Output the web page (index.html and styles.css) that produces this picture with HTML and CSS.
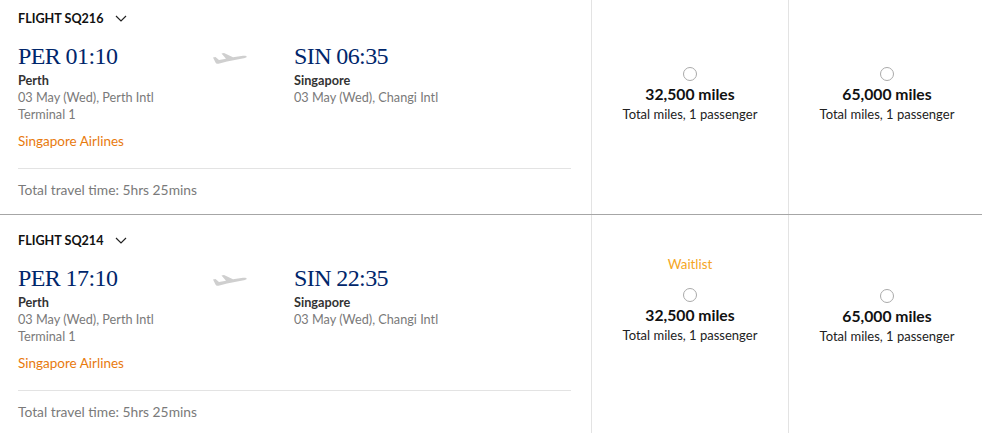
FILE: index.html
```html
<!DOCTYPE html>
<html lang="en">
<head>
<meta charset="utf-8">
<title>Flights</title>
<link rel="stylesheet" href="styles.css">
</head>
<body>
<section class="row">
  <div class="info">
    <div class="flight-title"><span>FLIGHT SQ216</span>
      <svg class="chev" width="12" height="7" viewBox="0 0 12 7"><path d="M1 1l5 5 5-5" fill="none" stroke="#222" stroke-width="1.2"/></svg>
    </div>
    <div class="legs">
      <div class="leg">
        <div class="time">PER 01:10</div>
        <div class="city">Perth</div>
        <div class="detail">03 May (Wed), Perth Intl</div>
        <div class="detail">Terminal 1</div>
      </div>
      <div class="plane">
        <svg width="34" height="14" viewBox="0 0 34 14"><path d="M0 5.500l2.500-.5 3.500 3 7-1.200L8.500 1.500 11 1l9 4.300 10-1.500c2-.3 3.800.2 3.800 1 0 .7-1.500 1.100-3 1.400L14 9.500l-8.500 2.200C4 12 3 11.500 2.500 10.500z" fill="#cfcfcf"/></svg>
      </div>
      <div class="leg">
        <div class="time">SIN 06:35</div>
        <div class="city">Singapore</div>
        <div class="detail">03 May (Wed), Changi Intl</div>
      </div>
    </div>
    <div class="airline">Singapore Airlines</div>
    <div class="total">Total travel time: 5hrs 25mins</div>
  </div>
  <div class="fare">
    <span class="radio"></span>
    <div class="miles">32,500 miles</div>
    <div class="note">Total miles, 1 passenger</div>
  </div>
  <div class="fare">
    <span class="radio"></span>
    <div class="miles">65,000 miles</div>
    <div class="note">Total miles, 1 passenger</div>
  </div>
</section>
<section class="row second">
  <div class="info">
    <div class="flight-title"><span>FLIGHT SQ214</span>
      <svg class="chev" width="12" height="7" viewBox="0 0 12 7"><path d="M1 1l5 5 5-5" fill="none" stroke="#222" stroke-width="1.2"/></svg>
    </div>
    <div class="legs">
      <div class="leg">
        <div class="time">PER 17:10</div>
        <div class="city">Perth</div>
        <div class="detail">03 May (Wed), Perth Intl</div>
        <div class="detail">Terminal 1</div>
      </div>
      <div class="plane">
        <svg width="34" height="14" viewBox="0 0 34 14"><path d="M0 5.500l2.500-.5 3.500 3 7-1.200L8.500 1.500 11 1l9 4.300 10-1.500c2-.3 3.800.2 3.800 1 0 .7-1.500 1.100-3 1.400L14 9.500l-8.500 2.200C4 12 3 11.500 2.500 10.500z" fill="#cfcfcf"/></svg>
      </div>
      <div class="leg">
        <div class="time">SIN 22:35</div>
        <div class="city">Singapore</div>
        <div class="detail">03 May (Wed), Changi Intl</div>
      </div>
    </div>
    <div class="airline">Singapore Airlines</div>
    <div class="total">Total travel time: 5hrs 25mins</div>
  </div>
  <div class="fare">
    <div class="waitlist">Waitlist</div>
    <span class="radio"></span>
    <div class="miles">32,500 miles</div>
    <div class="note">Total miles, 1 passenger</div>
  </div>
  <div class="fare">
    <span class="radio"></span>
    <div class="miles">65,000 miles</div>
    <div class="note">Total miles, 1 passenger</div>
  </div>
</section>
</body>
</html>
```
FILE: styles.css
```css
html, body {
  margin: 0;
  padding: 0;
  background: #fff;
}
body {
  width: 982px;
  height: 433px;
  overflow: hidden;
  font-family: "Lato", "Liberation Sans", sans-serif;
  font-size: 12.700px;
  color: #333;
}
.row {
  display: grid;
  grid-template-columns: 592px 197px 193px;
  height: 215px;
  border-bottom: 1px solid #a6a6a6;
  box-sizing: border-box;
}
.second {
  height: 218px;
  border-bottom: 0;
}
.info {
  padding: 11px 20px 0 18px;
  border-right: 1px solid #e3e3e3;
  box-sizing: border-box;
  display: flex;
  flex-direction: column;
}
.second .info {
  padding-top: 18px;
}
.flight-title {
  display: flex;
  align-items: center;
  gap: 12px;
  height: 15px;
  font-size: 12.600px;
  font-weight: 700;
  color: #111;
}
.legs {
  display: grid;
  grid-template-columns: 195px 81px 1fr;
  margin-top: 16px;
  height: 84px;
}
.time {
  font-family: "Liberation Serif", serif;
  font-size: 24px;
  line-height: 29px;
  color: #00266b;
  letter-spacing: -0.6px;
}
.city {
  font-weight: 700;
  line-height: 16px;
  margin-top: 1px;
  color: #333;
}
.detail {
  line-height: 16px;
  color: #7a7a7a;
  margin-top: 1px;
}
.plane {
  padding-top: 10px;
}
.airline {
  color: #e87a0d;
  font-size: 13.500px;
  line-height: 16px;
  margin-top: 7px;
}
.total {
  margin-top: 19px;
  border-top: 1px solid #e3e3e3;
  padding-top: 12px;
  font-size: 13.800px;
  line-height: 18px;
  color: #7a7a7a;
}
.fare {
  display: flex;
  flex-direction: column;
  align-items: center;
  padding-top: 67px;
  border-right: 1px solid #e3e3e3;
  box-sizing: border-box;
}
.fare:last-child {
  border-right: 0;
  padding-left: 3px;
}
.second .fare:nth-child(2) {
  padding-top: 40px;
}
.second .fare:last-child {
  padding-top: 74px;
}
.radio {
  width: 12px;
  height: 12px;
  border: 1px solid #aaa;
  border-radius: 50%;
  display: block;
}
.miles {
  margin-top: 4px;
  font-size: 15.700px;
  font-weight: 700;
  line-height: 18px;
  color: #111;
}
.note {
  margin-top: 3px;
  font-size: 13px;
  line-height: 17px;
  color: #222;
}
.waitlist {
  color: #f5a623;
  font-size: 13.300px;
  line-height: 18px;
  margin-bottom: 15px;
}
```
